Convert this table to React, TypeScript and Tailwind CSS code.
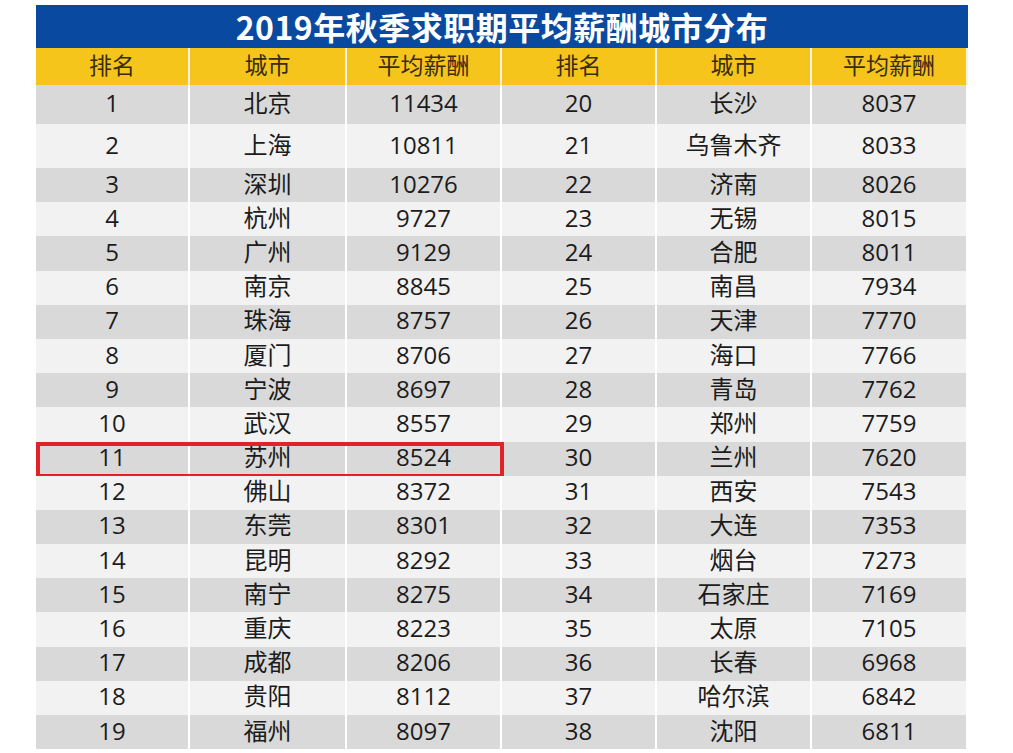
import React from "react";

const left: [string, string, string][] = [
  ["1", "北京", "11434"],
  ["2", "上海", "10811"],
  ["3", "深圳", "10276"],
  ["4", "杭州", "9727"],
  ["5", "广州", "9129"],
  ["6", "南京", "8845"],
  ["7", "珠海", "8757"],
  ["8", "厦门", "8706"],
  ["9", "宁波", "8697"],
  ["10", "武汉", "8557"],
  ["11", "苏州", "8524"],
  ["12", "佛山", "8372"],
  ["13", "东莞", "8301"],
  ["14", "昆明", "8292"],
  ["15", "南宁", "8275"],
  ["16", "重庆", "8223"],
  ["17", "成都", "8206"],
  ["18", "贵阳", "8112"],
  ["19", "福州", "8097"],
];

const right: [string, string, string][] = [
  ["20", "长沙", "8037"],
  ["21", "乌鲁木齐", "8033"],
  ["22", "济南", "8026"],
  ["23", "无锡", "8015"],
  ["24", "合肥", "8011"],
  ["25", "南昌", "7934"],
  ["26", "天津", "7770"],
  ["27", "海口", "7766"],
  ["28", "青岛", "7762"],
  ["29", "郑州", "7759"],
  ["30", "兰州", "7620"],
  ["31", "西安", "7543"],
  ["32", "大连", "7353"],
  ["33", "烟台", "7273"],
  ["34", "石家庄", "7169"],
  ["35", "太原", "7105"],
  ["36", "长春", "6968"],
  ["37", "哈尔滨", "6842"],
  ["38", "沈阳", "6811"],
];

const headers = ["排名", "城市", "平均薪酬", "排名", "城市", "平均薪酬"];
const cols = "grid grid-cols-[152px_155px_153px_153px_153px_154px] gap-x-[2px]";

export default function App() {
  return (
    <div
      className="min-h-screen bg-white pt-[5px] pl-[36px]"
      style={{ fontFamily: '"Open Sans", "Noto Sans CJK SC", sans-serif' }}
    >
      <div className="w-[932px]">
        <div
          className="h-[43px] bg-[#0a49a0] flex items-center justify-center text-white text-[32px] font-bold leading-none tracking-[0.5px] pb-[2px]"
          style={{ fontFamily: '"Noto Sans CJK SC", sans-serif' }}
        >
          2019年秋季求职期平均薪酬城市分布
        </div>
        <div className={`${cols} h-[37px] bg-[#f6f3e6]`}>
          {headers.map((h, i) => (
            <div
              key={i}
              className="bg-[#f5c51c] flex items-center justify-center text-[23px] text-[#3a2c10] leading-none pb-[2px]"
            >
              {h}
            </div>
          ))}
        </div>
        {left.map((row, i) => {
          const cells = [...row, ...right[i]];
          const gray = i % 2 === 0;
          const h = i === 0 ? "h-[39px]" : i === 1 ? "h-[44px]" : "h-[34.2px]";
          return (
            <div key={i} className={`${cols} ${h} bg-white relative`}>
              {cells.map((c, j) => (
                <div
                  key={j}
                  className={`${gray ? "bg-[#d9d9d9]" : "bg-[#f2f2f2]"} flex items-center justify-center text-[24px] text-[#1c1c1c] leading-none pb-[3px]`}
                >
                  {c}
                </div>
              ))}
              {i === 10 && (
                <div className="absolute left-0 top-0 w-[468px] h-[36px] border-[4px] border-[#e2222a]" />
              )}
            </div>
          );
        })}
      </div>
    </div>
  );
}
